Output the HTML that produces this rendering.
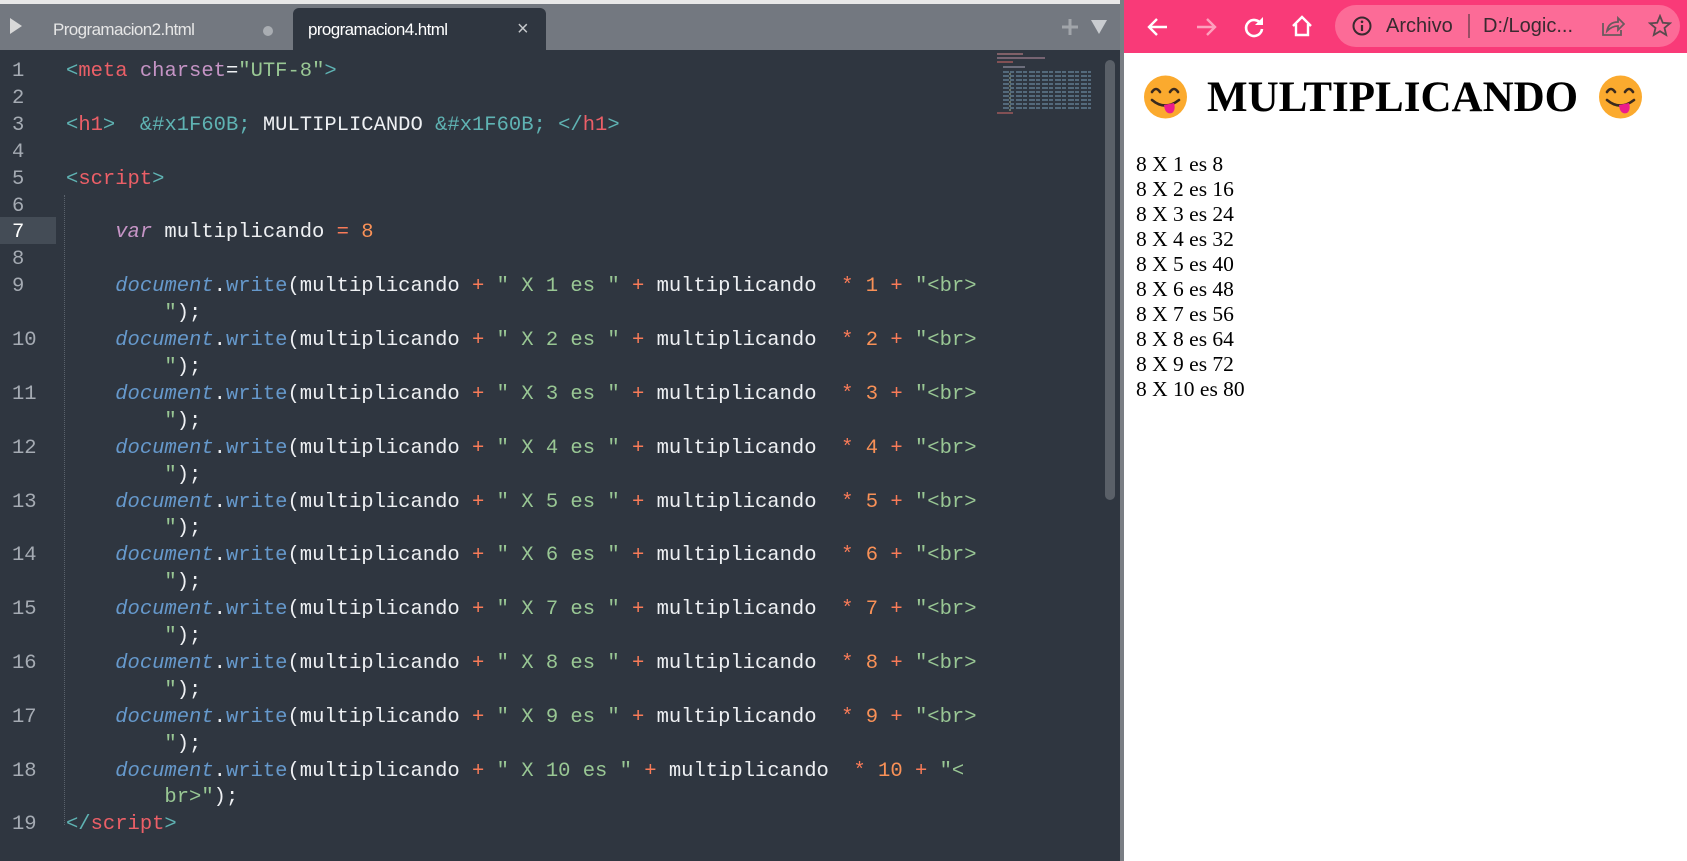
<!DOCTYPE html>
<html><head><meta charset="utf-8"><style>
*{margin:0;padding:0;box-sizing:border-box}
body{width:1687px;height:861px;overflow:hidden;background:#2f3640;position:relative;font-family:"Liberation Sans",sans-serif}
#top{position:absolute;left:0;top:0;width:1122px;height:4px;background:#e8e8e8}
#tabs{position:absolute;left:0;top:4px;width:1122px;height:46px;background:#737880}
.tab{position:absolute;top:5px;height:42px;font-size:17px;line-height:42px;color:#e6e6e6;letter-spacing:-0.6px}
#act{left:293px;width:253px;top:4px;background:#2f3640;border-radius:6px 6px 0 0}
#ed{position:absolute;left:0;top:50px;width:1122px;height:811px;background:#2f3640}
.ln{position:absolute;left:0;width:56px;font:20.5px/26.9px "Liberation Mono",monospace;color:#a5abb3;padding-left:12px}
.cd{position:absolute;left:66px;font:20.5px/26.9px "Liberation Mono",monospace;color:#eef0f3;white-space:pre}
.t{color:#5fb3b3}.n{color:#ec5f67}.a{color:#c594c5}.s{color:#99c794}.o{color:#f97b58}.m{color:#f99157}.d{color:#6699cc;font-style:italic}.w{color:#6699cc}.v{color:#c594c5;font-style:italic}
#br{position:absolute;left:1124px;top:0;width:563px;height:861px;background:#fff}
#tb{position:absolute;left:0;top:0;width:563px;height:53px;background:#f93a78}
#omni{position:absolute;left:211px;top:5px;width:345px;height:42px;border-radius:21px;background:#fc6b97}
.h1{position:absolute;font:bold 43px "Liberation Serif",serif;color:#000;top:73px;left:83px}
.list{position:absolute;left:12px;top:152px;font:21.5px/25px "Liberation Serif",serif;color:#000}
</style></head><body>
<div id="top"></div>
<div id="tabs">
<svg style="position:absolute;left:9px;top:13px" width="14" height="18"><path d="M1 1L13 9L1 17Z" fill="#d8d8d8"/></svg>
<div class="tab" style="left:53px">Programacion2.html</div>
<div style="position:absolute;left:263px;top:22px;width:10px;height:10px;border-radius:5px;background:#a9adb2"></div>
<div class="tab" id="act"><span style="margin-left:15px;color:#fff;position:relative;top:1px">programacion4.html</span><span style="position:absolute;left:224px;color:#c6c9cc;font-size:20px">×</span></div>
<svg style="position:absolute;left:1061px;top:14px" width="18" height="18"><path d="M9 1V17M1 9H17" stroke="#a1a5aa" stroke-width="3"/></svg>
<svg style="position:absolute;left:1091px;top:16px" width="16" height="14"><path d="M0 0H16L8 14Z" fill="#c9ccd0"/></svg>
</div>
<div id="ed">
<div style="position:absolute;left:0;top:167px;width:56px;height:27px;background:#444c56"></div>
<div style="position:absolute;left:64px;top:145px;height:630px;border-left:1px dotted #5a626c"></div>
<svg style="position:absolute;left:995px;top:2px" width="102" height="90">
<g stroke-width="1.3"><path d="M2 2H28" stroke="#b07a80"/><path d="M2 6H50" stroke="#a08090"/><path d="M2 10H18" stroke="#b06060"/><path d="M8 15H30" stroke="#9090a0"/>
<path d="M8 20H96M8 24H96M8 28H96M8 32H96M8 36H96M8 40H96M8 44H96M8 48H96M8 52H96M8 56H96" stroke="#6a8aa0" stroke-dasharray="6 1 4 2"/><path d="M14 22H16M14 26H16M14 30H16M14 34H16M14 38H16M14 42H16M14 46H16M14 50H16M14 54H16M14 58H16" stroke="#8a9a80"/><path d="M2 61H18" stroke="#b06060"/></g></svg>
<div style="position:absolute;left:1105px;top:10px;width:10px;height:440px;border-radius:5px;background:#5a6068"></div>
<div class="ln" style="top:9px">1<br>2<br>3<br>4<br>5<br>6<br><span style="color:#fff">7</span><br>8<br>9<br><br>10<br><br>11<br><br>12<br><br>13<br><br>14<br><br>15<br><br>16<br><br>17<br><br>18<br><br>19</div>
<div class="cd" style="top:9px"><span class="t">&lt;</span><span class="n">meta</span> <span class="a">charset</span>=<span class="s">"UTF-8"</span><span class="t">&gt;</span>

<span class="t">&lt;</span><span class="n">h1</span><span class="t">&gt;</span>  <span class="t">&amp;#x1F60B;</span> MULTIPLICANDO <span class="t">&amp;#x1F60B;</span> <span class="t">&lt;/</span><span class="n">h1</span><span class="t">&gt;</span>

<span class="t">&lt;</span><span class="n">script</span><span class="t">&gt;</span>

    <span class="v">var</span> multiplicando <span class="o">=</span> <span class="m">8</span>

    <span class="d">document</span>.<span class="w">write</span>(multiplicando <span class="o">+</span> <span class="s">" X 1 es "</span> <span class="o">+</span> multiplicando  <span class="o">*</span> <span class="m">1</span> <span class="o">+</span> <span class="s">"&lt;br&gt;</span>
        <span class="s">"</span>);
    <span class="d">document</span>.<span class="w">write</span>(multiplicando <span class="o">+</span> <span class="s">" X 2 es "</span> <span class="o">+</span> multiplicando  <span class="o">*</span> <span class="m">2</span> <span class="o">+</span> <span class="s">"&lt;br&gt;</span>
        <span class="s">"</span>);
    <span class="d">document</span>.<span class="w">write</span>(multiplicando <span class="o">+</span> <span class="s">" X 3 es "</span> <span class="o">+</span> multiplicando  <span class="o">*</span> <span class="m">3</span> <span class="o">+</span> <span class="s">"&lt;br&gt;</span>
        <span class="s">"</span>);
    <span class="d">document</span>.<span class="w">write</span>(multiplicando <span class="o">+</span> <span class="s">" X 4 es "</span> <span class="o">+</span> multiplicando  <span class="o">*</span> <span class="m">4</span> <span class="o">+</span> <span class="s">"&lt;br&gt;</span>
        <span class="s">"</span>);
    <span class="d">document</span>.<span class="w">write</span>(multiplicando <span class="o">+</span> <span class="s">" X 5 es "</span> <span class="o">+</span> multiplicando  <span class="o">*</span> <span class="m">5</span> <span class="o">+</span> <span class="s">"&lt;br&gt;</span>
        <span class="s">"</span>);
    <span class="d">document</span>.<span class="w">write</span>(multiplicando <span class="o">+</span> <span class="s">" X 6 es "</span> <span class="o">+</span> multiplicando  <span class="o">*</span> <span class="m">6</span> <span class="o">+</span> <span class="s">"&lt;br&gt;</span>
        <span class="s">"</span>);
    <span class="d">document</span>.<span class="w">write</span>(multiplicando <span class="o">+</span> <span class="s">" X 7 es "</span> <span class="o">+</span> multiplicando  <span class="o">*</span> <span class="m">7</span> <span class="o">+</span> <span class="s">"&lt;br&gt;</span>
        <span class="s">"</span>);
    <span class="d">document</span>.<span class="w">write</span>(multiplicando <span class="o">+</span> <span class="s">" X 8 es "</span> <span class="o">+</span> multiplicando  <span class="o">*</span> <span class="m">8</span> <span class="o">+</span> <span class="s">"&lt;br&gt;</span>
        <span class="s">"</span>);
    <span class="d">document</span>.<span class="w">write</span>(multiplicando <span class="o">+</span> <span class="s">" X 9 es "</span> <span class="o">+</span> multiplicando  <span class="o">*</span> <span class="m">9</span> <span class="o">+</span> <span class="s">"&lt;br&gt;</span>
        <span class="s">"</span>);
    <span class="d">document</span>.<span class="w">write</span>(multiplicando <span class="o">+</span> <span class="s">" X 10 es "</span> <span class="o">+</span> multiplicando  <span class="o">*</span> <span class="m">10</span> <span class="o">+</span> <span class="s">"&lt;</span>
        <span class="s">br&gt;"</span>);
<span class="t">&lt;/</span><span class="n">script</span><span class="t">&gt;</span></div>
</div>
<div style="position:absolute;left:1120px;top:0;width:4px;height:861px;background:#7a7e84"></div>
<div id="br">
<div id="tb">
<svg style="position:absolute;left:22px;top:15px" width="24" height="24"><path d="M21 12H4M11 4L3 12L11 20" stroke="#fff" stroke-width="2.4" fill="none"/></svg>
<svg style="position:absolute;left:70px;top:15px" width="24" height="24"><path d="M3 12H20M13 4L21 12L13 20" stroke="#fda0bd" stroke-width="2.4" fill="none"/></svg>
<svg style="position:absolute;left:118px;top:15px" width="24" height="24"><path d="M19 9A8 8 0 1 0 20 14" stroke="#fff" stroke-width="2.6" fill="none"/><path d="M21 2V10H13Z" fill="#fff"/></svg>
<svg style="position:absolute;left:166px;top:14px" width="24" height="24"><path d="M3 12L12 3L21 12M6 10V21H18V10" stroke="#fff" stroke-width="2.4" fill="none"/></svg>
<div id="omni">
<svg style="position:absolute;left:17px;top:11px" width="20" height="20"><circle cx="10" cy="10" r="8.5" stroke="#3a2a30" stroke-width="2" fill="none"/><path d="M10 9V15" stroke="#3a2a30" stroke-width="2.2"/><circle cx="10" cy="5.8" r="1.3" fill="#3a2a30"/></svg>
<span style="position:absolute;left:51px;top:10px;font-size:20px;color:#3a2a30">Archivo</span>
<div style="position:absolute;left:133px;top:9px;width:2px;height:24px;background:#9a4d65"></div>
<span style="position:absolute;left:148px;top:10px;font-size:20px;color:#3a2a30">D:/Logic...</span>
<svg style="position:absolute;left:266px;top:10px" width="24" height="22"><path d="M2 8V20H20V15" stroke="#6a5a5e" stroke-width="1.8" fill="none"/><path d="M6 16C7 10 11 7 17 7V3L23 9L17 15V11C12 11 9 13 6 16Z" stroke="#6a5a5e" stroke-width="1.8" fill="none"/></svg>
<svg style="position:absolute;left:313px;top:9px" width="24" height="24"><path d="M12 2L14.8 8.8L22 9.3L16.5 14L18.2 21L12 17.2L5.8 21L7.5 14L2 9.3L9.2 8.8Z" stroke="#5a4a4e" stroke-width="1.8" fill="none"/></svg>
</div>
</div>
<svg style="position:absolute;left:19px;top:75px" width="45" height="44" viewBox="0 0 45 44"><ellipse cx="22.5" cy="22" rx="21.5" ry="21.5" fill="#fbaa2e"/><path d="M9 17Q13 11 17 17M27 17Q31 11 35 17" stroke="#3a2a1e" stroke-width="2.6" fill="none" stroke-linecap="round"/><path d="M9 25Q22 36 36 25" stroke="#3a2a1e" stroke-width="2.6" fill="none" stroke-linecap="round"/><path d="M21 30Q22 40 29 38Q33 35 31 28Z" fill="#ec1c8c"/></svg>
<div class="h1">MULTIPLICANDO</div>
<svg style="position:absolute;left:474px;top:75px" width="45" height="44" viewBox="0 0 45 44"><ellipse cx="22.5" cy="22" rx="21.5" ry="21.5" fill="#fbaa2e"/><path d="M9 17Q13 11 17 17M27 17Q31 11 35 17" stroke="#3a2a1e" stroke-width="2.6" fill="none" stroke-linecap="round"/><path d="M9 25Q22 36 36 25" stroke="#3a2a1e" stroke-width="2.6" fill="none" stroke-linecap="round"/><path d="M21 30Q22 40 29 38Q33 35 31 28Z" fill="#ec1c8c"/></svg>
<div class="list">8 X 1 es 8<br>8 X 2 es 16<br>8 X 3 es 24<br>8 X 4 es 32<br>8 X 5 es 40<br>8 X 6 es 48<br>8 X 7 es 56<br>8 X 8 es 64<br>8 X 9 es 72<br>8 X 10 es 80</div>
</div>
</body></html>
